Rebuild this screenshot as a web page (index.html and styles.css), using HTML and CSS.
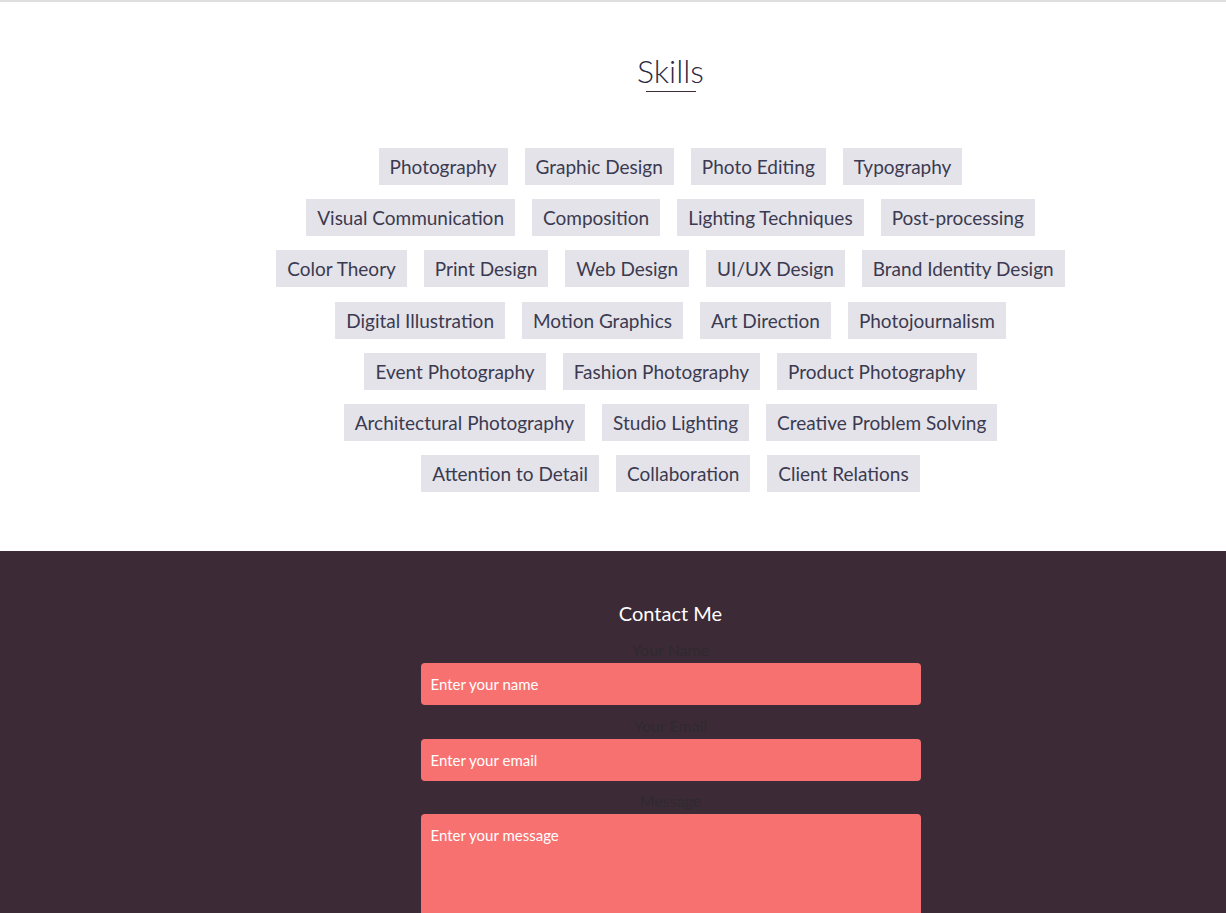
FILE: index.html
```html
<!DOCTYPE html>
<html lang="en">
<head>
<meta charset="utf-8">
<title>Skills &amp; Contact</title>
<link rel="stylesheet" href="styles.css">
</head>
<body>
<section class="skills">
  <div class="inner">
    <h2 class="skills-title">Skills</h2>
    <div class="title-rule"></div>
    <ul class="tags">
      <li class="tag">Photography</li>
      <li class="tag">Graphic Design</li>
      <li class="tag">Photo Editing</li>
      <li class="tag">Typography</li>
      <li class="tag">Visual Communication</li>
      <li class="tag">Composition</li>
      <li class="tag">Lighting Techniques</li>
      <li class="tag">Post-processing</li>
      <li class="tag">Color Theory</li>
      <li class="tag">Print Design</li>
      <li class="tag">Web Design</li>
      <li class="tag">UI/UX Design</li>
      <li class="tag">Brand Identity Design</li>
      <li class="tag">Digital Illustration</li>
      <li class="tag">Motion Graphics</li>
      <li class="tag">Art Direction</li>
      <li class="tag">Photojournalism</li>
      <li class="tag">Event Photography</li>
      <li class="tag">Fashion Photography</li>
      <li class="tag">Product Photography</li>
      <li class="tag">Architectural Photography</li>
      <li class="tag">Studio Lighting</li>
      <li class="tag">Creative Problem Solving</li>
      <li class="tag">Attention to Detail</li>
      <li class="tag">Collaboration</li>
      <li class="tag">Client Relations</li>
    </ul>
  </div>
</section>
<section class="contact">
  <div class="inner">
    <h2 class="contact-title">Contact Me</h2>
    <form class="form">
      <div class="group">
        <label class="label" for="name">Your Name</label>
        <input class="field" id="name" type="text" placeholder="Enter your name">
      </div>
      <div class="group">
        <label class="label" for="email">Your Email</label>
        <input class="field" id="email" type="email" placeholder="Enter your email">
      </div>
      <div class="group">
        <label class="label" for="message">Message</label>
        <textarea class="field area" id="message" placeholder="Enter your message"></textarea>
      </div>
    </form>
  </div>
</section>
</body>
</html>
```
FILE: styles.css
```css
* { box-sizing: border-box; }
html, body { margin: 0; padding: 0; }
body {
  font-family: Lato, "Noto Sans", "Liberation Sans", sans-serif;
  background: #ffffff;
}
.inner {
  margin-left: 115px;
  display: flex;
  flex-direction: column;
  align-items: center;
}
.skills {
  border-top: 2px solid #dedede;
  padding: 50px 0 59px;
}
.skills-title {
  margin: 0;
  font-weight: 300;
  font-size: 32px;
  line-height: 38px;
  color: #2c2a45;
}
.title-rule {
  width: 50px;
  height: 1px;
  background: #3a2b36;
  margin-top: 1px;
}
.tags {
  list-style: none;
  margin: 56px 0 0;
  padding: 0;
  width: 796px;
  display: flex;
  flex-wrap: wrap;
  justify-content: center;
  gap: 14.2px 17px;
}
.tag {
  background: #e4e3ea;
  color: #3b3a50;
  font-size: 19px;
  line-height: 23px;
  padding: 7px 11px;
}
.contact {
  background: #3c2a36;
  padding: 50px 0 0;
  height: 362px;
  overflow: hidden;
}
.contact-title {
  margin: 0;
  font-weight: 400;
  font-size: 20px;
  line-height: 24px;
  color: #ffffff;
}
.form {
  width: 500px;
  margin-top: 15px;
  display: flex;
  flex-direction: column;
  gap: 10.5px;
}
.group {
  display: flex;
  flex-direction: column;
  gap: 4px;
}
.label {
  text-align: center;
  font-size: 16px;
  line-height: 19px;
  color: #2f2a2e;
}
.field {
  display: block;
  width: 100%;
  height: 42px;
  border: none;
  border-radius: 4px;
  background: #f87171;
  color: #ffffff;
  font-family: Lato, "Noto Sans", sans-serif;
  font-size: 15px;
  padding: 0 10px;
  outline: none;
}
.field::placeholder { color: #ffffff; opacity: 1; }
.area {
  height: 130px;
  padding: 12px 10px;
  resize: none;
}
```
